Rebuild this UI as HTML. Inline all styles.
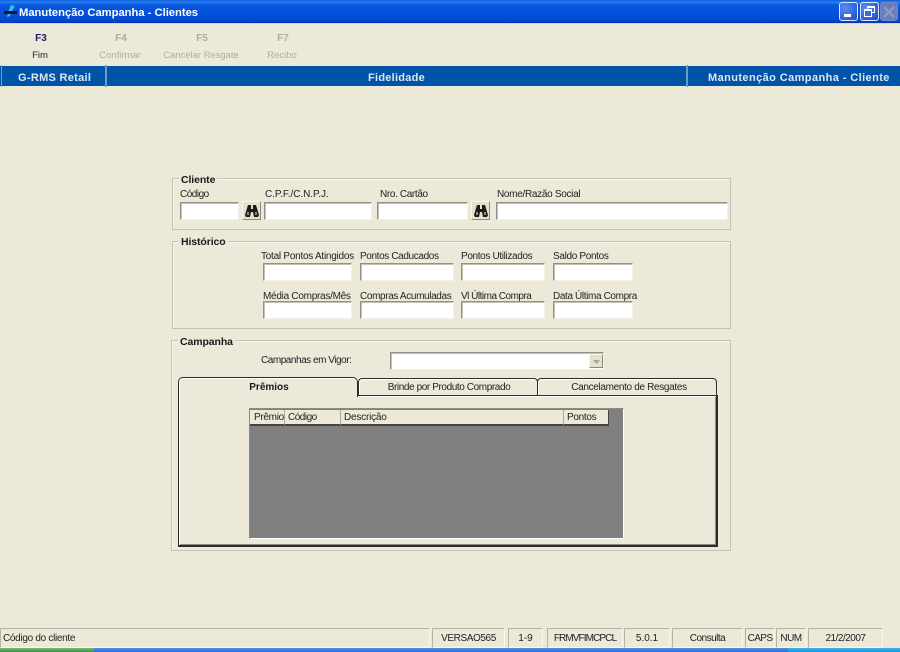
<!DOCTYPE html>
<html>
<head>
<meta charset="utf-8">
<style>
html,body{margin:0;padding:0;}
body{width:900px;height:652px;position:relative;overflow:hidden;background:#ece9d8;font-family:"Liberation Sans",sans-serif;font-size:10px;color:#222;}
.a,.t,.i,.g,.b,.s,.h,.c{position:absolute;box-sizing:border-box;}
.t{white-space:nowrap;line-height:12px;}
.i{background:#fff;border:1px solid;border-color:#939084 #f4f2e8 #f4f2e8 #939084;box-shadow:inset 1px 1px 0 #c4c1b2;}
.g{border:1px solid #c4c1ae;box-shadow:inset 1px 1px 0 #f6f5ee;}
.lg{background:#ece9d8;font-weight:bold;font-size:10.5px;color:#1a1a1a;padding:0 2px;letter-spacing:-.1px;}
.b{background:#e4e1cf;border:1px solid;border-color:#f8f7f0 #8e8b7e #8e8b7e #f8f7f0;}
.s{border:1px solid;border-color:#b5b2a0 #f8f7f0 #f8f7f0 #b5b2a0;text-align:center;line-height:19px;height:20px;top:628px;color:#222;white-space:nowrap;}
.h{top:410px;height:16px;background:#ece9d8;border-right:1px solid #a9a696;border-bottom:2px solid #45443e;line-height:16px;white-space:nowrap;}
.c{text-align:center;white-space:nowrap;}
</style>
</head>
<body>
<!-- title bar -->
<div class="a" style="left:0;top:0;width:900px;height:23px;background:linear-gradient(#0a5fe0 0,#2a7dee 2px,#0a58e0 5px,#0351dc 14px,#0448cf 20px,#0338b5 23px);"></div>
<div class="a" style="left:0;top:23px;width:900px;height:1px;background:#d9d6c6;"></div>
<svg class="a" style="left:3px;top:4px" width="15" height="15" viewBox="0 0 15 15"><path d="M8 1l4 1-3 5-2 5-3 1 1-5z" fill="#29c4e8"/><rect x="1" y="7" width="13" height="3" fill="#0b1030"/></svg>
<div class="t" style="left:19px;top:7px;font-size:11.2px;font-weight:bold;color:#fff;">Manutenção Campanha - Clientes</div>
<!-- window buttons -->
<div class="a" style="left:839px;top:2px;width:19px;height:19px;border:1px solid #dfe8fb;border-radius:3px;background:radial-gradient(circle at 30% 30%,#5c8cf0,#2f5fdc 70%,#2148bb);"><div class="a" style="left:4px;top:11px;width:7px;height:3px;background:#fff;"></div></div>
<div class="a" style="left:860px;top:2px;width:19px;height:19px;border:1px solid #dfe8fb;border-radius:3px;background:radial-gradient(circle at 30% 30%,#5c8cf0,#2f5fdc 70%,#2148bb);"><div class="a" style="left:6px;top:3px;width:8px;height:7px;border:1px solid #fff;border-top-width:2px;"></div><div class="a" style="left:3px;top:6px;width:8px;height:8px;border:1px solid #fff;border-top-width:2px;background:#3a68de;"></div></div>
<div class="a" style="left:880px;top:2px;width:18px;height:19px;border:1px solid #6f86c9;border-radius:3px;background:#6d7db8;"><svg class="a" style="left:2px;top:3px" width="12" height="12"><path d="M1 1l10 10M11 1L1 11" stroke="#8f9ccb" stroke-width="2"/></svg></div>
<!-- toolbar -->
<div class="c" style="left:21px;top:33px;width:40px;font-weight:bold;color:#1c1c6e;font-size:10px;">F3</div>
<div class="c" style="left:20px;top:50px;width:40px;color:#222;font-size:9.5px;">Fim</div>
<div class="c" style="left:101px;top:33px;width:40px;font-weight:bold;color:#aeaca0;font-size:10px;">F4</div>
<div class="c" style="left:90px;top:50px;width:60px;color:#b0aea2;font-size:9.5px;">Confirmar</div>
<div class="c" style="left:151px;top:50px;width:100px;color:#b0aea2;font-size:9.5px;letter-spacing:-.03px;">Cancelar Resgate</div>
<div class="c" style="left:182px;top:33px;width:40px;font-weight:bold;color:#aeaca0;font-size:10px;">F5</div>
<div class="c" style="left:263px;top:33px;width:40px;font-weight:bold;color:#aeaca0;font-size:10px;">F7</div>
<div class="c" style="left:252px;top:50px;width:60px;color:#b0aea2;font-size:9.5px;">Recibo</div>
<!-- header band -->
<div class="a" style="left:0;top:66px;width:900px;height:20px;background:#0053a6;"></div>
<div class="a" style="left:1px;top:65px;width:1px;height:22px;background:#6f9bcb;"></div>
<div class="a" style="left:105px;top:65px;width:2px;height:22px;background:#6f9bcb;"></div>
<div class="a" style="left:686px;top:65px;width:2px;height:22px;background:#6f9bcb;"></div>
<div class="t" style="left:18px;top:72px;font-size:11px;font-weight:bold;color:#dce8f4;letter-spacing:.3px;">G-RMS Retail</div>
<div class="c" style="left:107px;top:72px;width:579px;font-size:11px;font-weight:bold;color:#dce8f4;letter-spacing:.25px;line-height:12px;">Fidelidade</div>
<div class="t" style="left:708px;top:72px;font-size:11px;font-weight:bold;color:#dce8f4;letter-spacing:.41px;">Manutenção Campanha - Cliente</div>

<!-- Cliente -->
<div class="g" style="left:172px;top:178px;width:559px;height:52px;"></div>
<div class="t lg" style="left:179px;top:174px;">Cliente</div>
<div class="t" style="left:180px;top:189px;letter-spacing:-.5px;">Código</div>
<div class="t" style="left:265px;top:189px;letter-spacing:-.07px;">C.P.F./C.N.P.J.</div>
<div class="t" style="left:380px;top:189px;letter-spacing:-.36px;">Nro. Cartão</div>
<div class="t" style="left:497px;top:189px;letter-spacing:-.3px;">Nome/Razão Social</div>
<div class="i" style="left:180px;top:202px;width:59px;height:18px;"></div>
<div class="b" style="left:242px;top:201px;width:19px;height:19px;"><svg class="a" style="left:2px;top:3px" width="14" height="12" viewBox="0 0 14 12"><path d="M3 0h3v4h2V0h3l3 10-1 2H9L8 7H6l-1 5H1L0 10z" fill="#1c1c1c"/><path d="M2 7h2v3H2zM10 7h2v3h-2z" fill="#8a8a80"/></svg></div>
<div class="i" style="left:264px;top:202px;width:108px;height:18px;"></div>
<div class="i" style="left:377px;top:202px;width:91px;height:18px;"></div>
<div class="b" style="left:471px;top:201px;width:19px;height:19px;"><svg class="a" style="left:2px;top:3px" width="14" height="12" viewBox="0 0 14 12"><path d="M3 0h3v4h2V0h3l3 10-1 2H9L8 7H6l-1 5H1L0 10z" fill="#1c1c1c"/><path d="M2 7h2v3H2zM10 7h2v3h-2z" fill="#8a8a80"/></svg></div>
<div class="i" style="left:496px;top:202px;width:232px;height:18px;"></div>

<!-- Historico -->
<div class="g" style="left:172px;top:241px;width:559px;height:88px;"></div>
<div class="t lg" style="left:179px;top:236px;">Histórico</div>
<div class="t" style="left:261px;top:251px;letter-spacing:-.25px;">Total Pontos Atingidos</div>
<div class="t" style="left:360px;top:251px;letter-spacing:-.37px;">Pontos Caducados</div>
<div class="t" style="left:461px;top:251px;letter-spacing:-.35px;">Pontos Utilizados</div>
<div class="t" style="left:553px;top:251px;letter-spacing:-.33px;">Saldo Pontos</div>
<div class="i" style="left:263px;top:263px;width:89px;height:18px;"></div>
<div class="i" style="left:360px;top:263px;width:94px;height:18px;"></div>
<div class="i" style="left:461px;top:263px;width:84px;height:18px;"></div>
<div class="i" style="left:553px;top:263px;width:80px;height:18px;"></div>
<div class="t" style="left:263px;top:291px;letter-spacing:-.27px;">Média Compras/Mês</div>
<div class="t" style="left:360px;top:291px;letter-spacing:-.36px;">Compras Acumuladas</div>
<div class="t" style="left:461px;top:291px;letter-spacing:-.5px;">Vl Última Compra</div>
<div class="t" style="left:553px;top:291px;letter-spacing:-.37px;">Data Última Compra</div>
<div class="i" style="left:263px;top:301px;width:89px;height:18px;"></div>
<div class="i" style="left:360px;top:301px;width:94px;height:18px;"></div>
<div class="i" style="left:461px;top:301px;width:84px;height:18px;"></div>
<div class="i" style="left:553px;top:301px;width:80px;height:18px;"></div>

<!-- Campanha -->
<div class="g" style="left:171px;top:340px;width:560px;height:211px;"></div>
<div class="t lg" style="left:178px;top:336px;">Campanha</div>
<div class="t" style="left:261px;top:355px;letter-spacing:-.47px;">Campanhas em Vigor:</div>
<div class="i" style="left:390px;top:352px;width:214px;height:18px;"></div>
<div class="b" style="left:589px;top:354px;width:14px;height:14px;"><svg class="a" style="left:3px;top:5px" width="7" height="4"><path d="M0 0h7L3.5 4z" fill="#a8a698"/></svg></div>

<!-- Tab panel -->
<div class="a" style="left:178px;top:395px;width:540px;height:152px;background:#ece9d8;border:1px solid #2d2c28;border-width:1px 2px 2px 1px;box-shadow:inset 1px 1px 0 #fff,inset -1px -1px 0 #8e8b7e;"></div>
<div class="a" style="left:178px;top:377px;width:180px;height:20px;background:#ece9d8;border:1px solid #2d2c28;border-bottom:none;border-radius:5px 5px 0 0;box-shadow:inset 1px 1px 0 #fff;z-index:2;"></div>
<div class="a" style="left:358px;top:378px;width:180px;height:18px;background:#ece9d8;border:1px solid #2d2c28;border-left-width:1px;border-radius:4px 4px 0 0;box-shadow:inset 1px 1px 0 #fff;"></div>
<div class="a" style="left:537px;top:378px;width:180px;height:18px;background:#ece9d8;border:1px solid #2d2c28;border-radius:4px 4px 0 0;box-shadow:inset 1px 1px 0 #fff;"></div>
<div class="c" style="left:179px;top:382px;width:180px;font-weight:bold;line-height:12px;z-index:3;color:#1a1a1a;">Prêmios</div>
<div class="c" style="left:359px;top:382px;width:180px;line-height:12px;letter-spacing:-.4px;">Brinde por Produto Comprado</div>
<div class="c" style="left:539px;top:382px;width:180px;line-height:12px;letter-spacing:-.33px;">Cancelamento de Resgates</div>

<!-- Grid -->
<div class="a" style="left:249px;top:408px;width:375px;height:131px;background:#808080;border:1px solid;border-color:#8e8b7e #fff #fff #8e8b7e;"></div>
<div class="h" style="left:250px;width:35px;padding-left:4px;letter-spacing:-.3px;">Prêmio</div>
<div class="h" style="left:285px;width:56px;padding-left:3px;letter-spacing:-.5px;">Código</div>
<div class="h" style="left:341px;width:223px;padding-left:3px;letter-spacing:-.2px;">Descrição</div>
<div class="h" style="left:564px;width:45px;padding-left:3px;letter-spacing:-.3px;border-right-color:#45443e;">Pontos</div>

<!-- Status bar -->
<div class="s" style="left:0;width:430px;text-align:left;padding-left:2px;letter-spacing:-.3px;">Código do cliente</div>
<div class="s" style="left:432px;width:73px;letter-spacing:-.4px;">VERSAO565</div>
<div class="s" style="left:508px;width:35px;">1-9</div>
<div class="s" style="left:547px;width:76px;letter-spacing:-.9px;">FRMVFIMCPCL</div>
<div class="s" style="left:624px;width:46px;">5.0.1</div>
<div class="s" style="left:672px;width:71px;letter-spacing:-.5px;">Consulta</div>
<div class="s" style="left:745px;width:30px;letter-spacing:-.6px;">CAPS</div>
<div class="s" style="left:776px;width:30px;letter-spacing:-.5px;">NUM</div>
<div class="s" style="left:808px;width:75px;letter-spacing:-.5px;">21/2/2007</div>

<!-- taskbar strip -->
<div class="a" style="left:0;top:648px;width:900px;height:4px;background:linear-gradient(#4f93ec,#2a6fdc);"></div>
<div class="a" style="left:0;top:648px;width:94px;height:4px;background:linear-gradient(#7cbb7c,#3f8f3f);"></div>
<div class="a" style="left:788px;top:648px;width:112px;height:4px;background:linear-gradient(#3fb0ee,#1a96e0);"></div>
</body>
</html>
